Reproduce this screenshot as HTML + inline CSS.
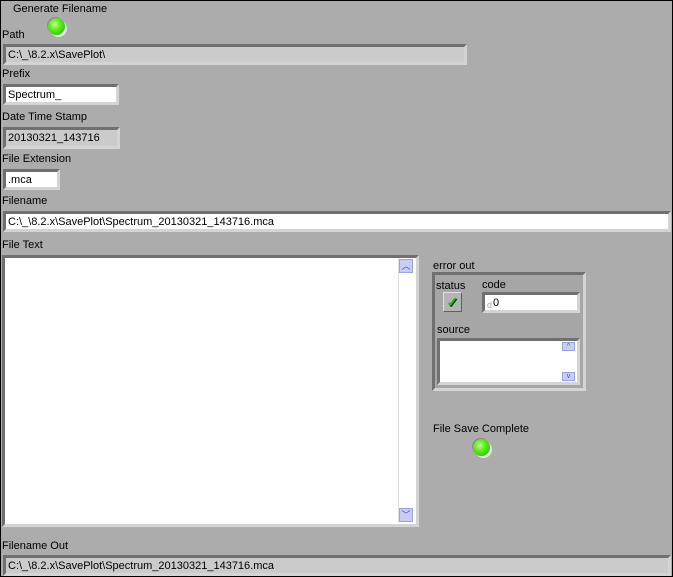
<!DOCTYPE html><html><head><style>
body{margin:0;width:673px;height:577px;overflow:hidden;background:#000;font-family:"Liberation Sans",sans-serif;font-size:11px;color:#000}
#p{position:absolute;left:1px;top:1px;width:671px;height:575px;background:#acacac}
.a{position:absolute}
.l{position:absolute;white-space:nowrap;line-height:13px;margin-top:1px}
.f{position:absolute;box-sizing:border-box;border-style:solid;border-width:3px;border-color:#707070 #d4d4d4 #d4d4d4 #707070;line-height:14px;padding-left:2px;padding-top:1px;white-space:nowrap;overflow:hidden}
.w{background:#fff}.g{background:#cbcbcb}
.led{position:absolute;width:17px;height:17px;border-radius:50%;background:radial-gradient(circle at 40% 38%,#c8ff9a 0,#5ef01c 35%,#2fc40a 80%,#1a8a05 100%);box-shadow:2px 2px 0 #e8e8e8,-1px -1px 0 #8a8a8a}
.sb{position:absolute;width:14px;height:14px;background:#c8cdf7;border:1px solid #9aa3e0;box-sizing:border-box;color:#3a5a8a;font-size:9px;text-align:center;line-height:12px}
</style></head><body><div id="p"></div>
<div class="l" style="left:13px;top:2px">Generate Filename</div>
<div class="led" style="left:48px;top:18px"></div>
<div class="l" style="left:2px;top:28px">Path</div>
<div class="f g" style="left:3px;top:44px;width:464px;height:21px">C:\_\8.2.x\SavePlot\</div>
<div class="l" style="left:2px;top:67px">Prefix</div>
<div class="f w" style="left:3px;top:84px;width:116px;height:21px">Spectrum_</div>
<div class="l" style="left:2px;top:110px">Date Time Stamp</div>
<div class="f g" style="left:3px;top:127px;width:117px;height:22px">20130321_143716</div>
<div class="l" style="left:2px;top:152px">File Extension</div>
<div class="f w" style="left:3px;top:169px;width:57px;height:21px">.mca</div>
<div class="l" style="left:2px;top:194px">Filename</div>
<div class="f w" style="left:3px;top:211px;width:668px;height:21px">C:\_\8.2.x\SavePlot\Spectrum_20130321_143716.mca</div>
<div class="l" style="left:2px;top:238px">File Text</div>
<div class="f w" style="left:2px;top:255px;width:417px;height:272px"></div>
<div class="a" style="left:398px;top:258px;width:16px;height:265px;background:#fff;border-left:1px solid #e0e0e0"></div>
<div class="sb" style="left:399px;top:259px">︿</div>
<div class="sb" style="left:399px;top:508px">﹀</div>
<div class="l" style="left:433px;top:259px">error out</div>
<div class="a" style="left:432px;top:272px;width:154px;height:119px;box-sizing:border-box;border:3px solid;border-color:#707070 #d4d4d4 #d4d4d4 #707070;background:#a6a6a6"></div>
<div class="l" style="left:436px;top:279px">status</div>
<div class="l" style="left:482px;top:278px">code</div>
<div class="a" style="left:443px;top:292px;width:19px;height:20px;box-sizing:border-box;border:1px solid;border-color:#e0e0e0 #606060 #606060 #e0e0e0;background:#b4b4b4;color:#10c010;font-weight:bold;font-size:14px;text-align:center;line-height:18px;text-shadow:1px 1px 0 #064006">✓</div>
<div class="f w" style="left:482px;top:292px;width:98px;height:21px;padding-left:8px">0</div>
<div class="l" style="left:487px;top:298px;color:#aaa;font-size:9px">d</div>
<div class="l" style="left:437px;top:323px">source</div>
<div class="f w" style="left:437px;top:338px;width:143px;height:47px"></div>
<div class="sb" style="left:562px;top:342px;width:13px;height:9px;line-height:7px;font-size:7px">^</div>
<div class="sb" style="left:562px;top:372px;width:13px;height:9px;line-height:7px;font-size:7px">v</div>
<div class="l" style="left:433px;top:422px">File Save Complete</div>
<div class="led" style="left:473px;top:439px"></div>
<div class="l" style="left:2px;top:539px">Filename Out</div>
<div class="f g" style="left:3px;top:555px;width:668px;height:21px">C:\_\8.2.x\SavePlot\Spectrum_20130321_143716.mca</div>
</body></html>
